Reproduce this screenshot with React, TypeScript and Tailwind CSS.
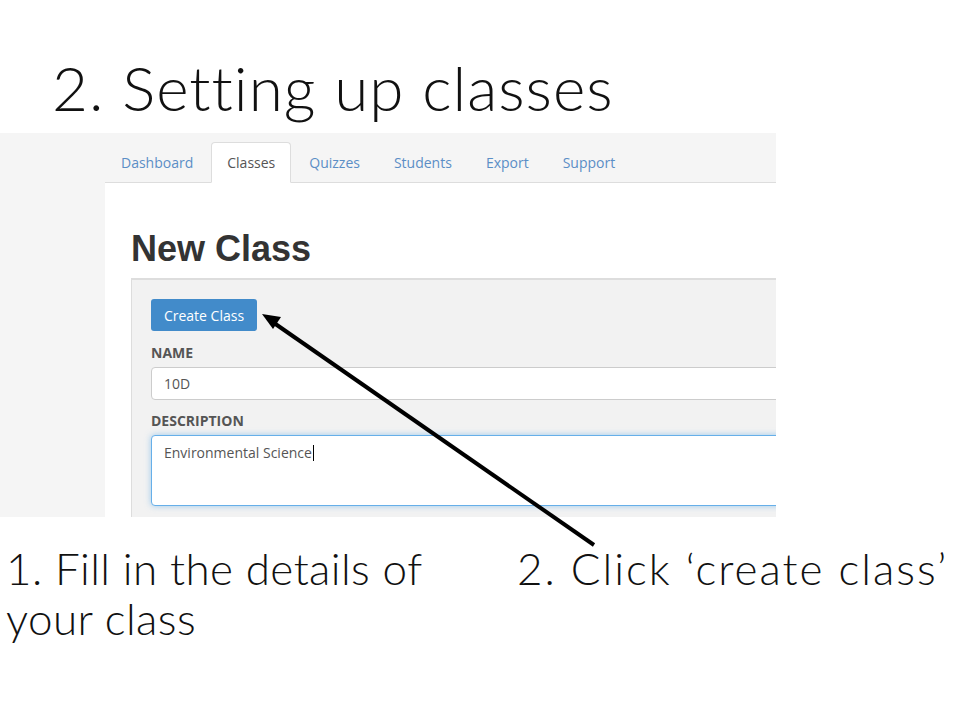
import React from "react";

const tabs = ["Dashboard", "Classes", "Quizzes", "Students", "Export", "Support"];

function NavTabs() {
  return (
    <div className="flex h-[50px] items-end border-b border-[#dddddd]">
      {tabs.map((t) =>
        t === "Classes" ? (
          <div
            key={t}
            className="-mb-px mr-[2px] flex h-[41px] items-center rounded-t-[4px] border border-[#dddddd] border-b-white bg-white px-[15px] text-[14px] text-[#555555]"
          >
            {t}
          </div>
        ) : (
          <div
            key={t}
            className="mr-[2px] flex h-[40px] items-center px-[16px] text-[14px] text-[#5b8ec6]"
          >
            {t}
          </div>
        )
      )}
    </div>
  );
}

function ClassForm() {
  return (
    <div className="flex-1 bg-white pl-[26px] pt-[46px]">
      <h1 className="font-['Liberation_Sans',Arial,sans-serif] text-[36px] leading-[40px] font-bold text-[#333333]">
        New Class
      </h1>
      <div className="mt-[9px] h-full border-t-2 border-l border-[#dddddd] bg-[#f2f2f2] pl-[19px] pt-[19px]">
        <button className="h-[32px] w-[106px] rounded-[3px] bg-[#428bca] text-[14px] text-white">
          Create Class
        </button>
        <div className="mt-[13px] text-[14px] leading-[18px] font-bold text-[#555555]">NAME</div>
        <div className="mt-[5px] flex h-[33px] w-[700px] items-center rounded-[4px] border border-[#cccccc] bg-white pl-[12px] text-[14px] text-[#555555]">
          10D
        </div>
        <div className="mt-[12px] text-[14px] leading-[18px] font-bold text-[#555555]">DESCRIPTION</div>
        <div className="mt-[5px] h-[71px] w-[700px] rounded-[4px] border border-[#66afe9] bg-white pl-[12px] pt-[6px] text-[14px] text-[#555555] shadow-[0_0_6px_rgba(102,175,233,0.6)]">
          Environmental Science<span className="ml-px inline-block h-[16px] w-px translate-y-[3px] bg-black" />
        </div>
      </div>
    </div>
  );
}

function Arrow() {
  return (
    <svg className="pointer-events-none absolute left-0 top-0" width="960" height="720">
      <line x1="594" y1="545" x2="274" y2="323" stroke="#000" strokeWidth="4" />
      <polygon points="262,314 281,317 273,329" fill="#000" />
    </svg>
  );
}

export default function App() {
  return (
    <div className="relative h-[720px] w-[960px] overflow-hidden bg-white">
      <div className="h-[133px] pl-[52px] pt-[52px] font-['Lato',sans-serif] text-[62px] leading-[70px] font-light tracking-[1px] text-[#111111] [font-variant-ligatures:none]">
        2. Setting up classes
      </div>
      <div className="flex h-[384px] w-[776px] overflow-hidden bg-[#f5f5f5] font-['Open_Sans',sans-serif]">
        <div className="w-[105px] shrink-0" />
        <div className="flex min-w-0 flex-1 flex-col">
          <NavTabs />
          <ClassForm />
        </div>
      </div>
      <div className="flex pt-[26px] font-['Lato',sans-serif] text-[44px] leading-[50px] font-light text-[#111111] [font-variant-ligatures:none]">
        <div className="w-[440px] pl-[6px] tracking-[0.4px]">1. Fill in the details of your class</div>
        <div className="pl-[77px] tracking-[2px] whitespace-nowrap">2. Click ‘create class’</div>
      </div>
      <Arrow />
    </div>
  );
}
